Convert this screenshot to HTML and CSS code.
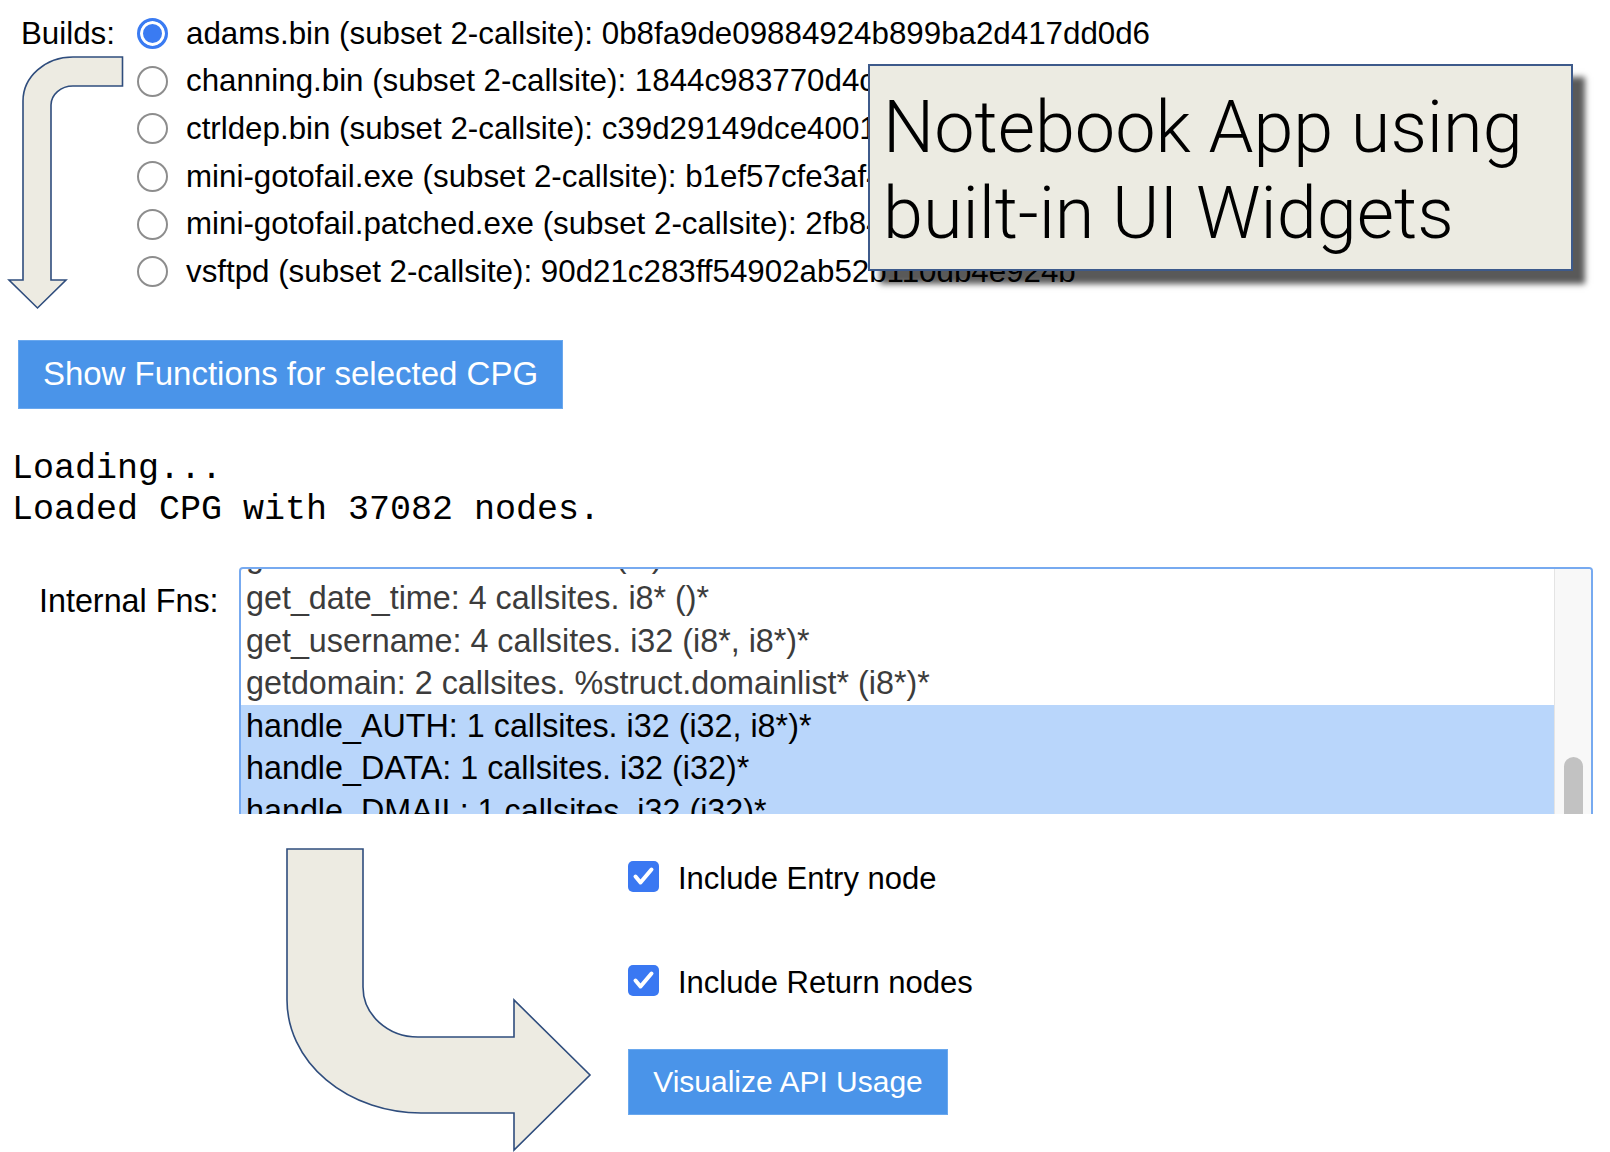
FILE: index.html
```html
<!DOCTYPE html>
<html lang="en">
<head>
<meta charset="utf-8">
<title>Notebook App using built-in UI Widgets</title>
<link rel="stylesheet" href="styles.css">
</head>
<body>
<div class="page">
  <section class="builds">
    <div class="builds-label">Builds:</div>
    <div class="radios">
      <div class="opt"><span class="radio on"></span><span>adams.bin (subset 2-callsite): 0b8fa9de09884924b899ba2d417dd0d6</span></div>
      <div class="opt"><span class="radio"></span><span>channing.bin (subset 2-callsite): 1844c983770d4c5e91a27bd03f6e2c48</span></div>
      <div class="opt"><span class="radio"></span><span>ctrldep.bin (subset 2-callsite): c39d29149dce4001b7a26e93d5f0c81a</span></div>
      <div class="opt"><span class="radio"></span><span>mini-gotofail.exe (subset 2-callsite): b1ef57cfe3af42d09c6b18e7a53f2d90</span></div>
      <div class="opt"><span class="radio"></span><span>mini-gotofail.patched.exe (subset 2-callsite): 2fb84c1d97e3a05b6f28</span></div>
      <div class="opt"><span class="radio"></span><span>vsftpd (subset 2-callsite): 90d21c283ff54902ab52b110db4e924b</span></div>
    </div>
  </section>

  <button class="btn btn-show" type="button">Show Functions for selected CPG</button>

  <pre class="log">Loading...
Loaded CPG with 37082 nodes.</pre>

  <section class="fns">
    <div class="fns-label">Internal Fns:</div>
    <div class="listbox">
      <div class="rows">
        <div class="row">gencode: 2 callsites. void (i8)*</div>
        <div class="row">get_date_time: 4 callsites. i8* ()*</div>
        <div class="row">get_username: 4 callsites. i32 (i8*, i8*)*</div>
        <div class="row">getdomain: 2 callsites. %struct.domainlist* (i8*)*</div>
        <div class="row sel">handle_AUTH: 1 callsites. i32 (i32, i8*)*</div>
        <div class="row sel">handle_DATA: 1 callsites. i32 (i32)*</div>
        <div class="row sel">handle_DMAIL: 1 callsites. i32 (i32)*</div>
      </div>
      <div class="track"><div class="thumb"></div></div>
    </div>
  </section>

  <section class="opts">
    <div class="chk-row">
      <span class="chk"><svg viewBox="0 0 31 31" width="31" height="31"><path d="M7.5 15.5 L12.5 21.5 L23.5 8.5" fill="none" stroke="#fff" stroke-width="4" stroke-linecap="round" stroke-linejoin="round"/></svg></span>
      <span>Include Entry node</span>
    </div>
    <div class="chk-row">
      <span class="chk"><svg viewBox="0 0 31 31" width="31" height="31"><path d="M7.5 15.5 L12.5 21.5 L23.5 8.5" fill="none" stroke="#fff" stroke-width="4" stroke-linecap="round" stroke-linejoin="round"/></svg></span>
      <span>Include Return nodes</span>
    </div>
    <button class="btn btn-viz" type="button">Visualize API Usage</button>
  </section>

  <svg class="arrow arrow-top" viewBox="0 0 130 320" width="130" height="320">
    <path d="M122.5 57 L73 57 A50 44 0 0 0 23 101 L23 280 L9 280 L37.5 308 L66 280 L51 280 L51 105 A22 19 0 0 1 73 86 L122.5 86 Z"/>
  </svg>

  <div class="callout">Notebook App using<br>built-in UI Widgets</div>

  <svg class="arrow arrow-bottom" viewBox="280 840 320 312" width="320" height="312">
    <path d="M287 849 L363 849 L363 987 A55 50 0 0 0 418 1037 L514 1037 L514 1000 L590 1075 L514 1150 L514 1113 L421 1113 A134 113 0 0 1 287 1000 Z"/>
  </svg>
</div>
</body>
</html>
```

FILE: styles.css
```css
* { box-sizing: border-box; }

body {
  margin: 0;
  background: #ffffff;
  font-family: "Liberation Sans", Arial, sans-serif;
  color: #000;
}

.page {
  position: relative;
  width: 1610px;
  height: 1152px;
  overflow: hidden;
}

/* ---- Builds radio group ---- */
.builds {
  display: flex;
  padding: 10px 0 0 21px;
  font-size: 31.3px;
}
.builds-label {
  width: 116px;
  line-height: 47.6px;
}
.opt {
  display: flex;
  align-items: center;
  height: 47.6px;
  white-space: nowrap;
}
.radio {
  flex: none;
  width: 31px;
  height: 31px;
  border-radius: 50%;
  border: 2px solid #8d8d8d;
  background: #fff;
  margin-right: 18px;
}
.radio.on {
  border: 3px solid #3a7bf2;
  background: #3a7bf2;
  box-shadow: inset 0 0 0 3px #fff;
}

/* ---- Buttons ---- */
.btn {
  display: block;
  border: none;
  padding: 0;
  background: #4a94e9;
  color: #fff;
  font-family: "Liberation Sans", Arial, sans-serif;
  text-align: center;
  box-shadow: inset 0 0 0 1px #6aa8ee;
}
.btn-show {
  margin: 44.4px 0 0 18px;
  width: 545px;
  height: 69px;
  font-size: 33px;
}

/* ---- Log output ---- */
.log {
  margin: 40px 0 0 12px;
  font-family: "Liberation Mono", "Courier New", monospace;
  font-size: 35px;
  line-height: 41px;
}

/* ---- Internal functions list ---- */
.fns {
  display: flex;
  margin-top: 36px;
}
.fns-label {
  width: 239px;
  padding: 13.5px 0 0 39px;
  line-height: 42.5px;
  font-size: 32.3px;
}
.listbox {
  display: flex;
  width: 1354px;
  height: 247px;
  border: 2px solid #77aaf0;
  border-bottom: none;
  border-radius: 4px 4px 0 0;
  overflow: hidden;
  font-size: 32.3px;
}
.rows {
  flex: 1;
  margin-top: -34px;
}
.row {
  height: 42.5px;
  line-height: 42.5px;
  padding-left: 5px;
  color: #3c3c3c;
  white-space: nowrap;
}
.row.sel {
  background: #b9d6fb;
  color: #000;
}
.track {
  flex: none;
  width: 37px;
  background: #f8f8f8;
  border-left: 1px solid #e4e4e4;
  padding: 188px 0 0 9px;
}
.thumb {
  width: 19px;
  height: 100px;
  background: #c2c2c2;
  border-radius: 10px;
}

/* ---- Options ---- */
.opts {
  margin-top: 40px;
  padding-left: 628px;
  font-size: 31px;
}
.chk-row {
  display: flex;
  align-items: center;
  height: 50px;
  white-space: nowrap;
}
.chk-row + .chk-row {
  margin-top: 54px;
}
.chk {
  flex: none;
  width: 31px;
  height: 31px;
  border-radius: 5px;
  background: #3a78f2;
  margin: 0 19px 5px 0;
  display: flex;
}
.btn-viz {
  margin-top: 41px;
  width: 320px;
  height: 66px;
  font-size: 30px;
}

/* ---- Annotations (drawn over the canvas) ---- */
.arrow {
  position: absolute;
  overflow: visible;
}
.arrow path {
  fill: #edebe2;
  stroke: #2f4d7d;
  stroke-width: 1.6;
  stroke-linejoin: miter;
}
.arrow-top {
  left: 0;
  top: 0;
}
.arrow-bottom {
  left: 280px;
  top: 840px;
}

.callout {
  position: absolute;
  left: 868px;
  top: 64px;
  width: 705px;
  height: 207px;
  padding: 18.5px 0 0 13px;
  background: #ecebe2;
  border: 2px solid #3d5a8b;
  box-shadow: 12px 13px 6px rgba(0, 0, 0, 0.65);
  font-family: Roboto, "Liberation Sans", sans-serif;
  font-weight: 300;
  font-size: 72px;
  line-height: 86px;
  color: #000;
  white-space: nowrap;
}
```
